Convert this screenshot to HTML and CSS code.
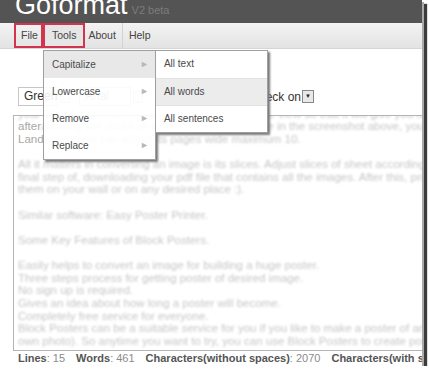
FILE: index.html
```html
<!DOCTYPE html>
<html lang="en">
<head>
    <meta charset="UTF-8">
    <title>Goformat</title>
    <link rel="stylesheet" href="styles.css">
</head>
<body>
    <div class="app">
        <div class="header">
            <span class="logo">Goformat</span>
            <span class="ver">V2 beta</span>
        </div>
        <ul class="menubar">
            <li class="mark m-file">File</li>
            <li class="mark open m-tools">Tools
                <ul class="drop">
                    <li class="on">Capitalize<span class="arr">&#9658;</span>
                        <ul class="sub">
                            <li>All text</li>
                            <li class="on">All words</li>
                            <li>All sentences</li>
                        </ul>
                    </li>
                    <li>Lowercase<span class="arr">&#9658;</span></li>
                    <li>Remove<span class="arr">&#9658;</span></li>
                    <li>Replace<span class="arr">&#9658;</span></li>
                </ul>
            </li>
            <li class="m-about">About</li>
            <li class="m-help">Help</li>
        </ul>
        <div class="toolbar">
            <div class="sel sel-color">Green</div>
            <div class="btn"></div>
            <div class="sel sel-font">Arial</div>
            <div class="btn"></div>
            <span class="label">Spell check on</span>
            <div class="btn btn-dark"><span>&#9660;</span></div>
        </div>
        <div class="editor">
            <div class="text">
                <div class="line fog">your image, you can choose Portrait or Landscape view so that it will give you full idea of</div>
                <div class="line"><span class="sharp">after</span><span class="fog"> allowing the slices of image, as you could see in the screenshot above, you</span></div>
                <div class="line"><span class="sharp">Land</span><span class="fog">scape and can adjust its pages wide maximum 10.</span></div>
                <div class="line"></div>
                <div class="line fog">All it matters in converting an image is its slices. Adjust slices of sheet according to</div>
                <div class="line fog">final step of, downloading your pdf file that contains all the images. After this, print</div>
                <div class="line fog">them on your wall or on any desired place :).</div>
                <div class="line"></div>
                <div class="line fog">Similar software: Easy Poster Printer.</div>
                <div class="line"></div>
                <div class="line fog">Some Key Features of Block Posters.</div>
                <div class="line"></div>
                <div class="line fog">Easily helps to convert an image for building a huge poster.</div>
                <div class="line fog">Three steps process for getting poster of desired image.</div>
                <div class="line fog">No sign up is required.</div>
                <div class="line fog">Gives an idea about how long a poster will become.</div>
                <div class="line fog">Completely free service for everyone.</div>
                <div class="line fog">Block Posters can be a suitable service for you if you like to make a poster of an image of</div>
                <div class="line fog">own photo). So anytime you want to try, you can use Block Posters to create posters.</div>
            </div>
        </div>
        <div class="status">
            <span class="stat"><b>Lines</b>: 15</span>
            <span class="stat"><b>Words</b>: 461</span>
            <span class="stat"><b>Characters(without spaces)</b>: 2070</span>
            <span class="stat"><b>Characters(with spaces)</b>: 2530</span>
        </div>
    </div>
</body>
</html>
```
FILE: styles.css
```css
body{
    margin: 0;
    background: #fff;
    font-family: "Liberation Sans", Arial, sans-serif;
}
ul{
    margin: 0;
    padding: 0;
}
li{
    list-style: none;
}
.app{
    position: relative;
    width: 422px;
    height: 366px;
    background: #fff;
    box-shadow: 2px 2px 0 #aaa, 5px 4px 1px #3c3c3c;
}
.header{
    height: 23px;
    background: #545454;
    overflow: hidden;
    display: flex;
    align-items: baseline;
    padding-left: 15px;
}
.logo{
    font-size: 27px;
    line-height: 27px;
    margin-top: -8px;
    color: #fff;
}
.ver{
    margin-left: 4px;
    font-size: 11px;
    color: #7c7c7c;
}
.menubar{
    height: 25px;
    border-bottom: 1px solid #d6d6d6;
    background: linear-gradient(#f3f3f3, #e3e3e3);
    display: flex;
    padding-left: 14px;
    font-size: 10.5px;
    color: #444;
}
.menubar > li{
    position: relative;
    line-height: 25px;
    border-right: 1px solid #d2d2d2;
}
.m-file{
    padding: 0 4px 0 7px;
}
.m-tools{
    padding: 0 8px 0 9px;
}
.m-about{
    padding: 0 6px 0 3px;
}
.m-help{
    padding: 0 6px;
    border-right: none !important;
}
.menubar > li.mark{
    outline: 2px solid #d2334f;
    outline-offset: -2px;
}
.menubar > li.open{
    background: #e6e6e6;
}
.drop{
    position: absolute;
    left: 0;
    top: 27px;
    width: 111px;
    border: 1px solid #a0a0a0;
    background: rgba(255,255,255,0.9);
    box-shadow: 2px 2px 2px #777;
    z-index: 5;
}
.drop li{
    position: relative;
    height: 27px;
    line-height: 27px;
    padding-left: 8px;
    font-size: 10px;
    color: #4a4a4a;
}
.drop li.on{
    background: #e8e8e8;
}
.arr{
    position: absolute;
    left: 96px;
    font-size: 9px;
    color: #b8b8b8;
}
.sub{
    position: absolute;
    left: 111px;
    top: -1px;
    width: 111px;
    border: 1px solid #a0a0a0;
    background: #fff;
    box-shadow: 2px 2px 2px #777;
}
.sub li{
    border-top: 1px solid #e2e2e2;
    height: 26px;
    line-height: 26px;
}
.sub li:first-child{
    border-top: none;
    height: 27px;
}
.sub li.on{
    background: #ececec;
}
.toolbar{
    display: flex;
    align-items: center;
    height: 19px;
    margin: 38px 0 9px 18px;
    font-size: 12px;
    color: #333;
}
.sel{
    box-sizing: border-box;
    height: 19px;
    line-height: 17px;
    border: 1px solid #c6c6c6;
    padding-left: 5px;
    overflow: hidden;
    white-space: nowrap;
}
.sel-color{
    width: 40px;
}
.sel-font{
    width: 52px;
    margin-left: 9px;
    color: #999;
}
.btn{
    box-sizing: border-box;
    width: 10px;
    height: 12px;
    margin-left: 2px;
    border: 1px solid #ccc;
    background: #eee;
}
.label{
    margin-left: 80px;
    white-space: nowrap;
}
.btn-dark{
    width: 12px;
    height: 13px;
    margin-left: 1px;
    border-color: #888;
    background: #e8e8e8;
    font-size: 6px;
    line-height: 11px;
    text-align: center;
    color: #222;
}
.editor{
    box-sizing: border-box;
    height: 236px;
    margin-left: 13px;
    border: 1px solid #b4b4b4;
    border-right: none;
    padding-left: 4px;
    overflow: hidden;
}
.text{
    margin-top: -8.5px;
    font-size: 11.5px;
    line-height: 12.65px;
    color: #c6c6c6;
    white-space: nowrap;
}
.line{
    height: 12.65px;
}
.fog{
    display: inline-block;
    filter: blur(1px);
}
.line.fog{
    display: block;
}
.sharp{
    color: #a8a8a8;
}
.status{
    display: flex;
    height: 14px;
    line-height: 14px;
    padding-left: 18px;
    font-size: 11px;
    color: #8a8a8a;
    white-space: nowrap;
    overflow: hidden;
}
.stat{
    margin-right: 11px;
}
.status b{
    color: #555;
}
```
